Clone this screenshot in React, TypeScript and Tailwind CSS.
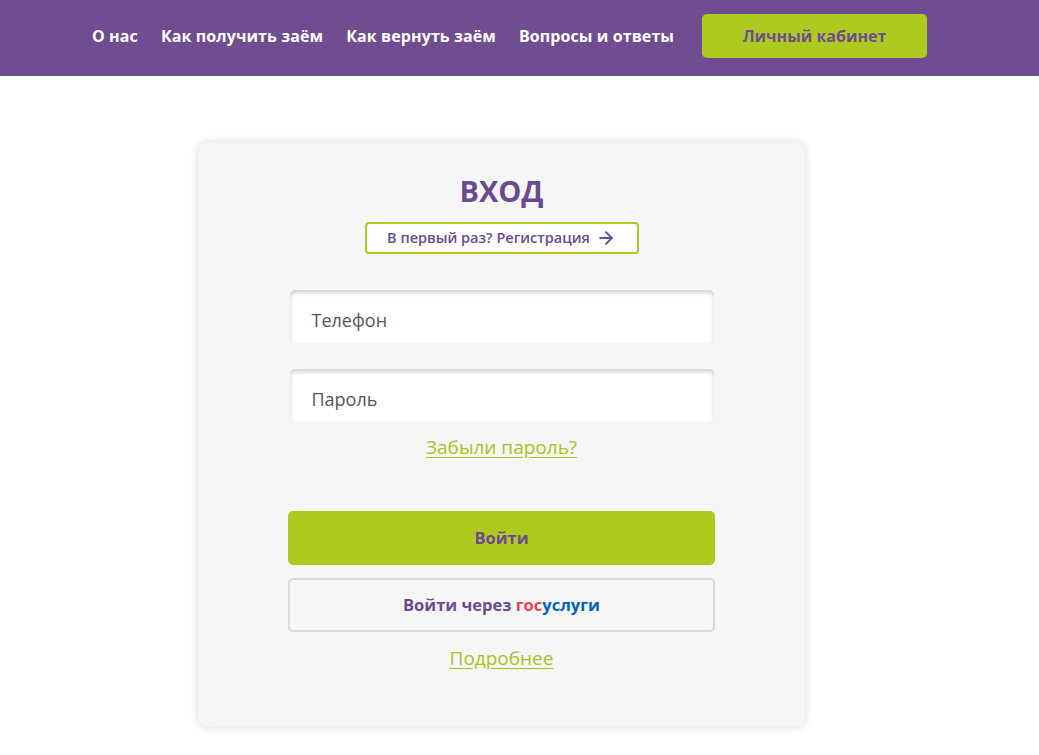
import { ArrowRight } from 'lucide-react'

const nav = ['О нас', 'Как получить заём', 'Как вернуть заём', 'Вопросы и ответы']

export default function App() {
  return (
    <div className="min-h-[755px] bg-white font-['Open_Sans',sans-serif]">
      <header className="h-[76px] bg-[#704d91]">
        <div className="flex h-full items-center pl-[92px]">
          <nav className="flex gap-[23px] pb-[4px]">
            {nav.map((item) => (
              <a key={item} href="#" className="text-[16px] font-bold tracking-[0.1px] text-white">
                {item}
              </a>
            ))}
          </nav>
          <button className="ml-[28px] mb-[4px] h-[44px] w-[225px] rounded-[5px] bg-[#afca1f] text-[16px] font-bold text-[#704d91]">
            Личный кабинет
          </button>
        </div>
      </header>

      <main className="flex justify-center pt-[66px] pr-[36px]">
        <div className="flex h-[585px] w-[607px] flex-col items-center rounded-[10px] bg-[#f6f6f6] pt-[30px] shadow-[0_0_8px_rgba(0,0,0,0.15)]">
          <h1 className="text-[29px] font-bold leading-[38px] text-[#6c4a8f]">ВХОД</h1>
          <button className="mt-[12px] flex h-[32px] w-[274px] items-center justify-center gap-[6px] rounded-[4px] border-2 border-[#afca1f] bg-white text-[14.5px] font-semibold text-[#6c4a8f]">
            В первый раз? Регистрация
            <ArrowRight className="h-[20px] w-[20px]" strokeWidth={2.25} />
          </button>

          <div className="mt-[36px] flex w-[424px] flex-col gap-[26px]">
            <div className="flex h-[53px] items-center rounded-[5px] bg-white pl-[22px] pt-[8px] text-[18px] text-[#555] shadow-[inset_0_3px_4px_rgba(0,0,0,0.18)]">
              Телефон
            </div>
            <div className="flex h-[53px] items-center rounded-[5px] bg-white pl-[22px] pt-[8px] text-[18px] text-[#555] shadow-[inset_0_3px_4px_rgba(0,0,0,0.18)]">
              Пароль
            </div>
          </div>
          <a href="#" className="mt-[11px] text-[19px] leading-[28px] text-[#a9c21f] underline underline-offset-[3px]">
            Забыли пароль?
          </a>

          <div className="mt-[50px] flex w-[427px] flex-col gap-[13px]">
            <button className="h-[54px] rounded-[5px] bg-[#afca1f] text-[16.5px] font-bold text-[#6c4a8f]">
              Войти
            </button>
            <button className="h-[54px] rounded-[5px] border-2 border-[#d9d7e1] bg-[#f6f6f6] text-[16.5px] font-bold text-[#6c4a8f]">
              Войти через <span className="text-[#ee3f58]">гос</span>
              <span className="text-[#0065b1]">услуги</span>
            </button>
          </div>
          <a href="#" className="mt-[12px] text-[19px] leading-[28px] text-[#a9c21f] underline underline-offset-[3px]">
            Подробнее
          </a>
        </div>
      </main>
    </div>
  )
}
